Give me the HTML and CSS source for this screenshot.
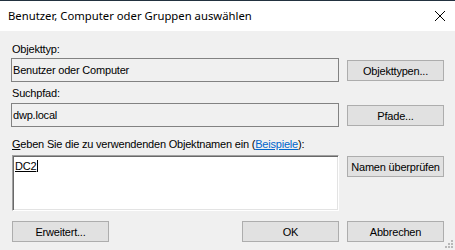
FILE: index.html
```html
<!DOCTYPE html>
<html lang="de">
<head>
  <meta charset="UTF-8">
  <title>Benutzer, Computer oder Gruppen auswählen</title>
  <link rel="stylesheet" href="styles.css">
</head>
<body>
  <div class="window">
    <div class="titlebar">
      <span class="title">Benutzer, Computer oder Gruppen auswählen</span>
      <svg class="close" width="12" height="12" viewBox="0 0 12 12">
        <path d="M1 1 L11 11 M11 1 L1 11" stroke="#000" stroke-width="1" fill="none"/>
      </svg>
    </div>

    <div class="content">
      <div class="label">Objekttyp:</div>
      <div class="row">
        <div class="field readonly">Benutzer oder Computer</div>
        <button class="btn">Objekttypen...</button>
      </div>

      <div class="label label-2">Suchpfad:</div>
      <div class="row">
        <div class="field readonly">dwp.local</div>
        <button class="btn">Pfade...</button>
      </div>

      <div class="label label-3"><u>G</u>eben Sie die zu verwendenden Objektnamen ein (<a href="#">Beispiele</a>):</div>
      <div class="row">
        <div class="field names"><span class="resolved">DC2</span><span class="caret"></span></div>
        <button class="btn btn-check">Namen überprüfen</button>
      </div>

      <div class="footer">
        <button class="btn btn-advanced">Erweitert...</button>
        <div class="footer-right">
          <button class="btn">OK</button>
          <button class="btn">Abbrechen</button>
        </div>
      </div>
    </div>

    <svg class="grip" width="8" height="8" viewBox="0 0 8 8">
      <rect x="6" y="0" width="2" height="2" fill="#b8b8b8"/>
      <rect x="3" y="3" width="2" height="2" fill="#b8b8b8"/>
      <rect x="6" y="3" width="2" height="2" fill="#b8b8b8"/>
      <rect x="0" y="6" width="2" height="2" fill="#b8b8b8"/>
      <rect x="3" y="6" width="2" height="2" fill="#b8b8b8"/>
      <rect x="6" y="6" width="2" height="2" fill="#b8b8b8"/>
    </svg>
  </div>
</body>
</html>
```

FILE: styles.css
```css
body {
  margin: 0;
  background-color: #f0f0f0;
  font-family: 'Liberation Sans', Arial, sans-serif;
  font-size: 11px;
  letter-spacing: -0.2px;
  color: #000;
}
.window {
  position: relative;
  width: 455px;
  height: 250px;
  overflow: hidden;
  background-color: #f0f0f0;
}
.titlebar {
  height: 30px;
  border-top: 1px solid #22313f;
  background-color: #fff;
  display: flex;
  align-items: center;
  justify-content: space-between;
  padding: 0 8px;
}
.title {
  font-family: 'Segoe UI', 'Noto Sans', sans-serif;
  font-size: 11.3px;
  letter-spacing: 0;
  margin-top: -1px;
}
.close {
  margin-right: 1px;
  margin-top: -1px;
}
.content {
  padding: 12px 11px 0 11px;
}
.label {
  line-height: 13px;
  height: 13px;
  padding-left: 1px;
  margin-bottom: 2px;
  white-space: nowrap;
}
.label-2 {
  margin-top: 5px;
  margin-bottom: 3px;
}
.label-3 {
  margin-top: 11px;
  margin-bottom: 4px;
}
.label a {
  color: #0066cc;
}
.row {
  display: flex;
  gap: 8px;
  align-items: flex-start;
}
.field {
  box-sizing: border-box;
  width: 328px;
  height: 24px;
  line-height: 13px;
  padding: 5px 2px 0 1px;
  white-space: nowrap;
}
.field.readonly {
  border: 1px solid #828282;
  background-color: #f0f0f0;
}
.field.names {
  height: 56px;
  padding: 4px 2px 0 2px;
  background-color: #fff;
  border-top: 1px solid #a0a0a0;
  border-left: 1px solid #a0a0a0;
  border-right: 1px solid #fff;
  border-bottom: 1px solid #fff;
  box-shadow: inset 1px 1px 0 #696969, inset -1px -1px 0 #e3e3e3;
  margin-left: 1px;
  width: 327px;
}
.resolved {
  text-decoration: underline;
}
.caret {
  display: inline-block;
  width: 1px;
  height: 12px;
  background-color: #000;
  vertical-align: -2px;
  margin-left: 1px;
}
.btn {
  box-sizing: border-box;
  width: 97px;
  height: 21px;
  margin: 2px 0 0 0;
  padding: 0;
  font-family: 'Liberation Sans', Arial, sans-serif;
  font-size: 11px;
  letter-spacing: -0.2px;
  color: #000;
  background-color: #e1e1e1;
  border: 1px solid #adadad;
  border-radius: 0;
}
.btn-check {
  margin-top: 1px;
  white-space: nowrap;
}
.footer {
  display: flex;
  justify-content: space-between;
  margin-top: 8px;
}
.footer-right {
  display: flex;
  gap: 8px;
}
.btn-advanced {
  margin-left: 1px;
}
.grip {
  position: absolute;
  right: 2px;
  bottom: 2px;
}
```
